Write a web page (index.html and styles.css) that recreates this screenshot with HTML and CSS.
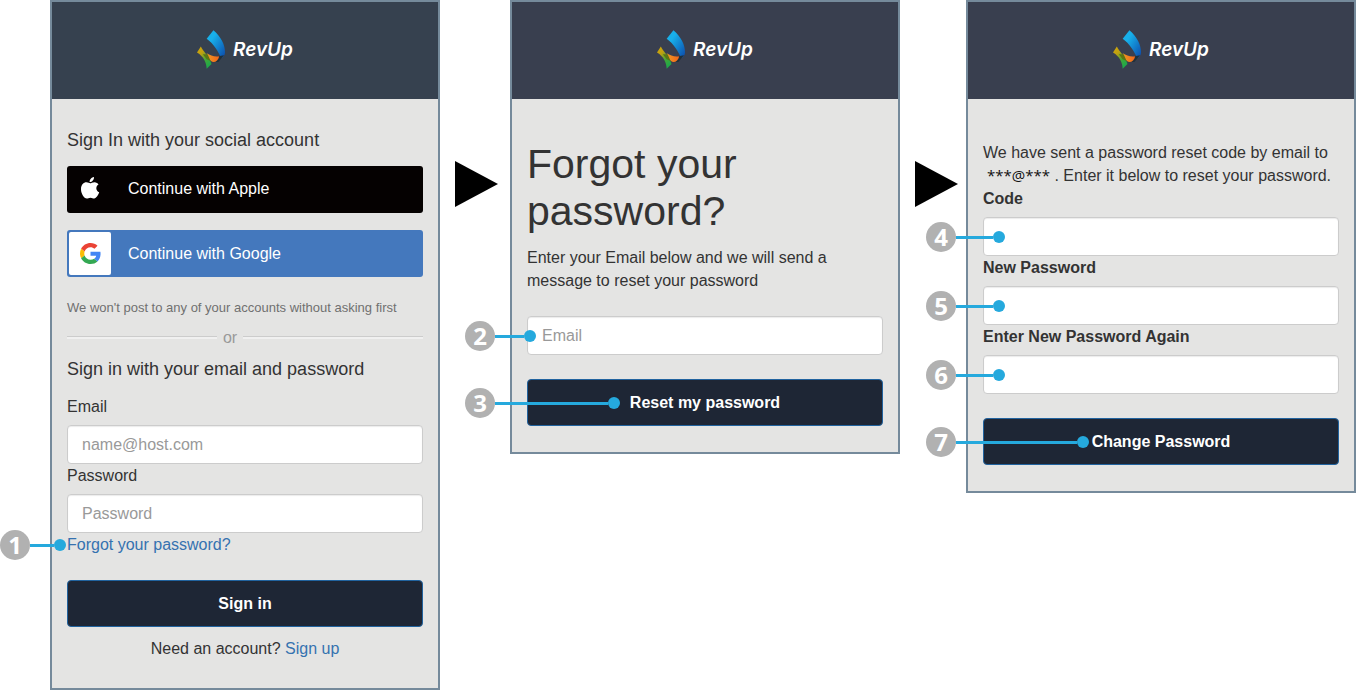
FILE: index.html
```html
<!DOCTYPE html>
<html lang="en">
<head>
    <meta charset="UTF-8">
    <meta name="viewport" content="width=device-width, initial-scale=1.0">
    <title>RevUp - Sign in</title>
    <link rel="stylesheet" href="styles.css">
</head>
<body>
    <!-- shared logo mark -->
    <svg class="defs" width="0" height="0" aria-hidden="true">
        <defs>
            <linearGradient id="blue" x1="0" y1="0" x2="1" y2="1">
                <stop offset="0.3" stop-color="#18b0ea"/>
                <stop offset="0.95" stop-color="#0c4fae"/>
            </linearGradient>
            <linearGradient id="gold" x1="0" y1="0" x2="0.6" y2="1">
                <stop offset="0" stop-color="#d3a80a"/>
                <stop offset="0.35" stop-color="#c0a010"/>
                <stop offset="0.7" stop-color="#3fa838"/>
                <stop offset="1" stop-color="#1fa849"/>
            </linearGradient>
            <linearGradient id="orange" x1="0" y1="0" x2="1" y2="0">
                <stop offset="0" stop-color="#ee9a22"/>
                <stop offset="1" stop-color="#f2641a"/>
            </linearGradient>
            <symbol id="mark" viewBox="0 0 30 40">
                <path fill="url(#blue)" d="M17 0C25 7 29 15 29 23C29 26 27 28 25 29C22 22 17 14 10 9Z"/>
                <path fill="#20303a" d="M28 26L22 33L18 33L22 27Z"/>
                <path fill="url(#gold)" d="M4 17C6 22 12 26 15 35L10 40C10 34 7 27 0 23Z"/>
                <path fill="url(#orange)" d="M10 24C14 26 18 28 23 27C22 31 20 33 17 33C14 33 12 29 10 24Z"/>
                <path fill="#5b7414" d="M6 25L11 25L14 32L10 30Z"/>
            </symbol>
        </defs>
    </svg>

    <main class="flow">
        <section class="panel">
            <header class="brand">
                <svg class="mark"><use href="#mark"/></svg>
                <span>RevUp</span>
            </header>
            <form class="content signin">
                <h2>Sign In with your social account</h2>
                <button type="button" class="social apple">
                    <span class="social-icon">
                        <svg width="20" height="24" viewBox="0 0 20 24"><path fill="#fff" d="M14 1C14.2 3.800 12 6.200 9.600 6.100C9.400 3.600 11.600 1.300 14 1ZM10.200 7.300C11.200 7.300 12.500 6.100 14.600 6.200C16.300 6.300 17.700 7.100 18.500 8.400C15.300 10.300 15.800 14.900 19.200 16.300C18.400 18.600 16.300 22.500 14.200 22.500C12.800 22.500 12.200 21.700 10.500 21.700C8.800 21.700 8 22.500 6.800 22.500C4 22.500 1 17.500 1 13.200C1 8.800 3.700 6.300 6.400 6.300C8.200 6.300 9.400 7.300 10.200 7.300Z"/></svg>
                    </span>
                    <span>Continue with Apple</span>
                </button>
                <button type="button" class="social google">
                    <span class="social-icon">
                        <svg width="21" height="21" viewBox="0 0 48 48">
                            <path fill="#EA4335" d="M24 9.500c3.540 0 6.710 1.220 9.210 3.600l6.850-6.850C35.900 2.380 30.470 0 24 0 14.620 0 6.510 5.380 2.560 13.220l7.980 6.190C12.430 13.720 17.740 9.500 24 9.500z"/>
                            <path fill="#4285F4" d="M46.980 24.550c0-1.570-.15-3.090-.38-4.550H24v9.020h12.940c-.58 2.960-2.260 5.480-4.780 7.180l7.730 6c4.510-4.180 7.090-10.360 7.090-17.650z"/>
                            <path fill="#FBBC05" d="M10.530 28.590c-.48-1.450-.76-2.990-.76-4.590s.27-3.140.76-4.590l-7.980-6.190C.92 16.460 0 20.120 0 24c0 3.880.92 7.540 2.560 10.780l7.970-6.190z"/>
                            <path fill="#34A853" d="M24 48c6.480 0 11.930-2.130 15.890-5.810l-7.730-6c-2.150 1.450-4.920 2.300-8.160 2.300-6.260 0-11.570-4.220-13.470-9.910l-7.980 6.190C6.510 42.620 14.620 48 24 48z"/>
                        </svg>
                    </span>
                    <span>Continue with Google</span>
                </button>
                <p class="note">We won't post to any of your accounts without asking first</p>
                <div class="or">or</div>
                <h2>Sign in with your email and password</h2>
                <label for="email">Email</label>
                <input type="email" id="email" placeholder="name@host.com">
                <label for="password">Password</label>
                <input type="password" id="password" placeholder="Password">
                <div class="anchor">
                    <a href="#forgot">Forgot your password?</a>
                    <div class="callout c1"><b>1</b><i></i></div>
                </div>
                <button type="submit" class="submit">Sign in</button>
                <p class="signup">Need an account? <a href="#signup">Sign up</a></p>
            </form>
        </section>

        <svg class="arrow" width="43" height="46" viewBox="0 0 43 46"><path d="M0 0L43 23L0 46Z"/></svg>

        <section class="panel" id="forgot">
            <header class="brand alt">
                <svg class="mark"><use href="#mark"/></svg>
                <span>RevUp</span>
            </header>
            <form class="content reset">
                <h1>Forgot your password?</h1>
                <p>Enter your Email below and we will send a message to reset your password</p>
                <div class="anchor">
                    <input type="email" aria-label="Email" placeholder="Email">
                    <div class="callout c2"><b>2</b><i></i></div>
                </div>
                <div class="anchor">
                    <button type="submit" class="submit">Reset my password</button>
                    <div class="callout c3"><b>3</b><i></i></div>
                </div>
            </form>
        </section>

        <svg class="arrow" width="43" height="46" viewBox="0 0 43 46"><path d="M0 0L43 23L0 46Z"/></svg>

        <section class="panel">
            <header class="brand alt">
                <svg class="mark"><use href="#mark"/></svg>
                <span>RevUp</span>
            </header>
            <form class="content change">
                <p>We have sent a password reset code by email to <span class="masked">***@***</span> . Enter it below to reset your password.</p>
                <label for="code">Code</label>
                <div class="anchor">
                    <input type="text" id="code">
                    <div class="callout c4"><b>4</b><i></i></div>
                </div>
                <label for="new">New Password</label>
                <div class="anchor">
                    <input type="password" id="new">
                    <div class="callout c4"><b>5</b><i></i></div>
                </div>
                <label for="again">Enter New Password Again</label>
                <div class="anchor">
                    <input type="password" id="again">
                    <div class="callout c4"><b>6</b><i></i></div>
                </div>
                <div class="anchor">
                    <button type="submit" class="submit">Change Password</button>
                    <div class="callout c7"><b>7</b><i></i></div>
                </div>
            </form>
        </section>
    </main>
</body>
</html>
```
FILE: styles.css
```css
* {
    box-sizing: border-box;
}
body {
    margin: 0;
    background: #fff;
    color: #333;
    font-family: "Liberation Sans", Arial, sans-serif;
    font-size: 16px;
    line-height: 23px;
}
h1, h2, p {
    margin: 0;
    font-weight: normal;
}
a {
    color: #3572b0;
    text-decoration: none;
}
.defs {
    position: absolute;
}
.flow {
    display: grid;
    grid-template-columns: 1fr 70px 1fr 66px 1fr;
    align-items: start;
    padding: 0 1px 0 50px;
}
.arrow {
    margin: 161px 0 0 15px;
}
.panel {
    border: 2px solid #758a9b;
    background: #e4e4e3;
}
.brand {
    display: flex;
    align-items: center;
    justify-content: center;
    gap: 7px;
    height: 97px;
    padding-bottom: 2px;
    background: #36414f;
    color: #fff;
    font: italic 600 19px Inter, sans-serif;
}
.brand.alt {
    background: #393f4f;
}
.mark {
    width: 29px;
    height: 39px;
}
.content {
    display: flex;
    flex-direction: column;
    padding: 42px 15px 26px;
}
.content.signin {
    padding: 30px 15px 28px;
}
h1 {
    font-size: 41px;
    line-height: 47px;
    margin-bottom: 11px;
}
h2 {
    font-size: 18px;
    line-height: 22px;
    margin-bottom: 15px;
}
label {
    line-height: 24px;
    margin-bottom: 6px;
}
.change label {
    font-weight: bold;
}
input {
    display: block;
    width: 100%;
    height: 39px;
    padding: 0 14px;
    border: 1px solid #ccc;
    border-radius: 4px;
    background: #fff;
    box-shadow: inset 0 1px 1px rgba(0, 0, 0, 0.08);
    font: inherit;
}
input::placeholder {
    color: #999;
}
button {
    font: inherit;
    color: #fff;
    cursor: pointer;
}
.social {
    display: flex;
    align-items: center;
    gap: 17px;
    height: 47px;
    margin-bottom: 17px;
    padding: 0 2px;
    border: 0;
    border-radius: 3px;
}
.social-icon {
    display: flex;
    align-items: center;
    justify-content: center;
    width: 42px;
    height: 43px;
    border-radius: 2px;
}
.apple {
    padding-bottom: 3px;
    background: #050101;
}
.google {
    background: #4478bd;
}
.google .social-icon {
    background: #fff;
}
.note {
    margin: 2px 0 7px;
    color: #707070;
    font-size: 13px;
}
.or {
    display: flex;
    align-items: center;
    gap: 6px;
    margin-bottom: 9px;
    color: #999;
}
.or::before, .or::after {
    content: "";
    flex: 5;
    height: 2px;
    border-top: 1px solid #ccc;
    background: #f0f0f0;
}
.or::after {
    flex: 6;
}
.submit {
    width: 100%;
    height: 47px;
    margin-top: 24px;
    border: 1px solid #21639f;
    border-radius: 4px;
    background: #1e2635;
    font-weight: bold;
}
.signup {
    margin-top: 10px;
    text-align: center;
}
.reset .anchor:first-of-type {
    margin-top: 24px;
}
.masked {
    padding-left: 4px;
    color: #111;
    font-family: "Open Sans", sans-serif;
    font-size: 15px;
}

/* numbered callouts that reach over the panel edge */
.anchor {
    position: relative;
}
.callout {
    position: absolute;
    bottom: 4px;
    display: flex;
    align-items: center;
}
.callout b {
    width: 30px;
    height: 30px;
    border-radius: 50%;
    background: #b1b1b1;
    color: #fff;
    font: bold 24px/30px "Open Sans", sans-serif;
    text-align: center;
}
.callout i {
    flex: 1;
    height: 3px;
    background: #25a9dd;
}
.callout::after {
    content: "";
    width: 12px;
    height: 12px;
    border-radius: 50%;
    background: #25a9dd;
}
.c1 {
    left: -67px;
    width: 66px;
    bottom: -4px;
}
.c2 {
    left: -62px;
    width: 71px;
}
.c3 {
    left: -62px;
    width: 155px;
    bottom: 8px;
}
.c4 {
    left: -57px;
    width: 79px;
}
.c7 {
    left: -57px;
    width: 163px;
    bottom: 8px;
}
```
